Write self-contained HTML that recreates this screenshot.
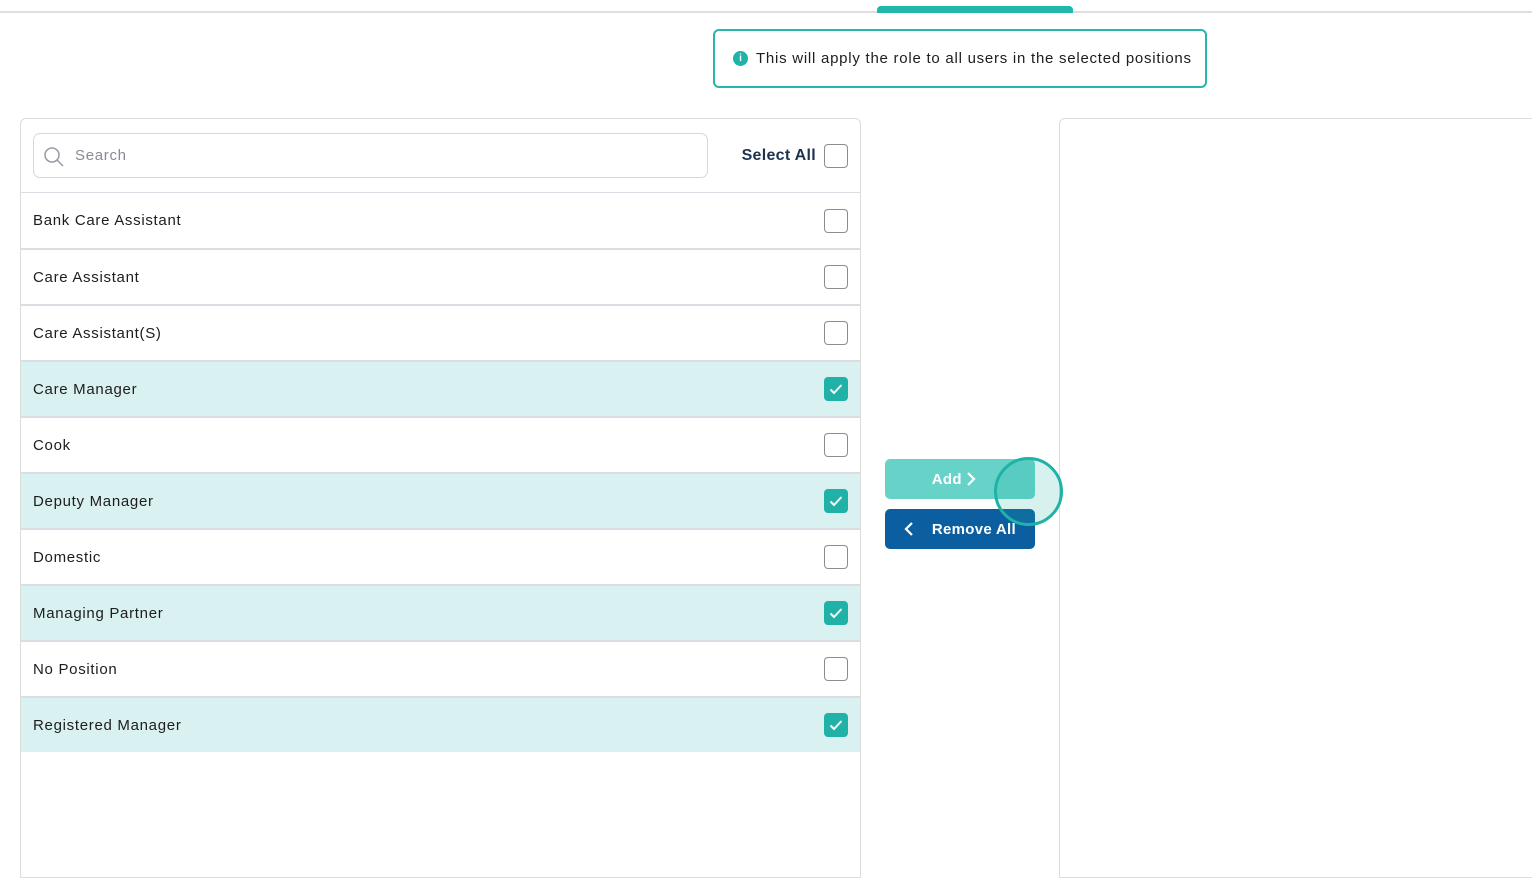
<!DOCTYPE html>
<html><head><style>
*{box-sizing:border-box;margin:0;padding:0}
body{width:1532px;height:862px;background:#fff;font-family:"Liberation Sans",sans-serif;position:relative;overflow:hidden;color:#1d1d1d}
.topline{position:absolute;left:0;top:11px;width:1532px;height:2px;background:#dedede}
.tab{position:absolute;left:877px;top:6px;width:196px;height:7px;background:#20b8ad;border-radius:4px 4px 0 0}
.info{position:absolute;left:713px;top:29px;width:494px;height:59px;border:2px solid #2ab5ac;border-radius:6px;font-size:15px;letter-spacing:0.75px;display:flex;align-items:center;padding-left:18px}
.info .i{width:15px;height:15px;border-radius:50%;background:#20b2a6;color:#fff;font-size:10px;font-weight:bold;display:inline-flex;align-items:center;justify-content:center;margin-right:8px;letter-spacing:0}
.left{position:absolute;left:20px;top:118px;width:841px;height:760px;border:1px solid #dcdcdc;border-radius:6px 6px 0 0}
.right{position:absolute;left:1059px;top:118px;width:480px;height:760px;border:1px solid #dcdcdc;border-radius:6px 0 0 0}
.search{position:absolute;left:12px;top:14px;width:675px;height:45px;border:1px solid #d8d8d8;border-radius:7px;font-size:15px;letter-spacing:0.7px;color:#8a8a95;display:flex;align-items:center;padding-left:41px}
.search svg{position:absolute;left:9px;top:12px}
.sa{position:absolute;right:12px;top:25px;display:flex;align-items:center;font-size:16px;font-weight:bold;color:#1e3350;letter-spacing:0.3px}
.cb{width:24px;height:24px;border:1px solid #8c8c8c;border-radius:4px;background:#fff;display:inline-block}
.sa .cb{margin-left:8px}
.rows{position:absolute;left:0;top:73px;width:839px}
.row{height:56px;border-top:1px solid #dcdce4;display:flex;align-items:center;justify-content:space-between;padding:0 12px;font-size:15px;letter-spacing:0.7px}
.row+.row{border-top:2px solid #dcdce4}
.row span{letter-spacing:0}
.row.on{background:#daf1f1}
.ck{width:24px;height:24px;border-radius:4px;background:#20b2a6;display:flex;align-items:center;justify-content:center}
.btn{position:absolute;left:885px;width:150px;height:40px;border-radius:5px;color:#fff;font-weight:bold;font-size:15px;letter-spacing:0.3px;display:flex;align-items:center;justify-content:center}
.add{top:459px;background:#66d2c8;padding-right:12px}
.rem{top:509px;background:#0b5fa1}
.ring{position:absolute;left:994px;top:457px;width:69px;height:69px;border:3px solid #20b2a6;border-radius:50%;background:rgba(32,178,166,.18)}
</style></head><body>
<div class="topline"></div><div class="tab"></div>
<div class="info"><span class="i">i</span>This will apply the role to all users in the selected positions</div>
<div class="left">
 <div class="search"><svg width="22" height="22" viewBox="0 0 22 22"><circle cx="9" cy="9" r="7" fill="none" stroke="#9a9aa5" stroke-width="1.5"/><line x1="14" y1="14" x2="20" y2="20" stroke="#9a9aa5" stroke-width="1.5"/></svg>Search</div>
 <div class="sa">Select All<span class="cb"></span></div>
 <div class="rows">
  <div class="row">Bank Care Assistant<span class="cb"></span></div>
  <div class="row">Care Assistant<span class="cb"></span></div>
  <div class="row">Care Assistant(S)<span class="cb"></span></div>
  <div class="row on">Care Manager<span class="ck"><svg width="14" height="12" viewBox="0 0 14 12"><path d="M1.5 6.5l3.5 3.5 7.5-8" fill="none" stroke="#fff" stroke-width="2"/></svg></span></div>
  <div class="row">Cook<span class="cb"></span></div>
  <div class="row on">Deputy Manager<span class="ck"><svg width="14" height="12" viewBox="0 0 14 12"><path d="M1.5 6.5l3.5 3.5 7.5-8" fill="none" stroke="#fff" stroke-width="2"/></svg></span></div>
  <div class="row">Domestic<span class="cb"></span></div>
  <div class="row on">Managing Partner<span class="ck"><svg width="14" height="12" viewBox="0 0 14 12"><path d="M1.5 6.5l3.5 3.5 7.5-8" fill="none" stroke="#fff" stroke-width="2"/></svg></span></div>
  <div class="row">No Position<span class="cb"></span></div>
  <div class="row on">Registered Manager<span class="ck"><svg width="14" height="12" viewBox="0 0 14 12"><path d="M1.5 6.5l3.5 3.5 7.5-8" fill="none" stroke="#fff" stroke-width="2"/></svg></span></div>
 </div>
</div>
<div class="right"></div>
<div class="btn add">Add&nbsp;<svg width="10" height="14" viewBox="0 0 10 14"><path d="M2 1l6 6-6 6" fill="none" stroke="#fff" stroke-width="2.2"/></svg></div>
<div class="btn rem"><svg width="10" height="14" viewBox="0 0 10 14"><path d="M8 1L2 7l6 6" fill="none" stroke="#fff" stroke-width="2.2"/></svg>&nbsp;&nbsp;&nbsp;&nbsp;Remove All</div>
<div class="ring"></div>
</body></html>
